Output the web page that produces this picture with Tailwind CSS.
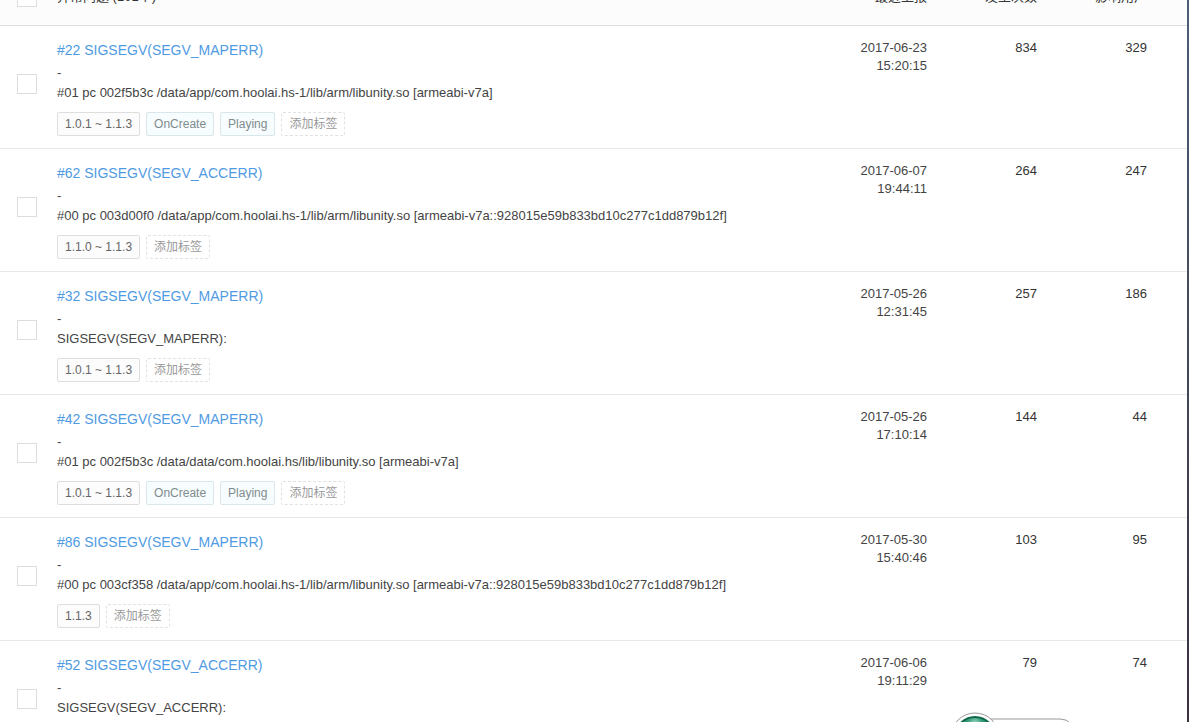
<!DOCTYPE html>
<html lang="zh-CN">

<head>
    <meta charset="UTF-8">
    <meta name="viewport" content="width=device-width, initial-scale=1.0">
    <title>异常问题</title>
    <script src="https://cdn.jsdelivr.net/npm/@tailwindcss/browser@4"></script>
</head>

<body class="relative h-screen overflow-hidden bg-white font-['Liberation_Sans','Noto_Sans_CJK_SC',sans-serif] text-[13px] text-[#444]">
    <!-- issue list, scrolled down a little -->
    <main class="-mt-[31px] bg-linear-to-b from-[#4c6178] to-[#3a3040] pr-[2px]">
        <table class="w-full table-fixed bg-white">
            <thead class="bg-[#fcfcfc] text-[#333]">
                <tr class="h-14 border-b border-[#dcdfe0]">
                    <th class="w-[57px] pl-[17px]"><input type="checkbox" aria-label="全选" class="block size-5 appearance-none border border-[#ddd] bg-white"></th>
                    <th class="text-left font-normal">异常问题 (101个)</th>
                    <th class="w-[110px] pr-10 text-right font-normal">最近上报</th>
                    <th class="w-[110px] pr-10 text-right font-normal">发生次数</th>
                    <th class="w-[110px] pr-10 text-right font-normal">影响用户</th>
                </tr>
            </thead>
            <tbody>
                <tr class="border-b border-[#e6e8e9] align-top">
                    <td class="pt-12 pl-[17px]"><input type="checkbox" aria-label="#22" class="block size-5 appearance-none border border-[#ddd] bg-white"></td>
                    <td class="py-3">
                        <a href="#" class="mb-px block text-sm leading-6 text-[#4f9be3]">#22 SIGSEGV(SEGV_MAPERR)</a>
                        <p class="leading-5">-</p>
                        <p class="leading-5">#01 pc 002f5b3c /data/app/com.hoolai.hs-1/lib/arm/libunity.so [armeabi-v7a]</p>
                        <div class="mt-[9px] flex gap-[6px] text-xs leading-[22px]">
                            <span class="rounded-xs border border-[#dedede] bg-[#fcfcfc] px-[7px] text-[#666]">1.0.1 ~ 1.1.3</span>
                            <a href="#" class="rounded-xs border border-[#d9e6ea] bg-[#f7fcfe] px-[7px] text-[#7f8c8d]">OnCreate</a>
                            <a href="#" class="rounded-xs border border-[#d9e6ea] bg-[#f7fcfe] px-[7px] text-[#7f8c8d]">Playing</a>
                            <button type="button" class="rounded-xs border border-dashed border-[#e2e2e2] px-[7px] text-[#999]">添加标签</button>
                        </div>
                    </td>
                    <td class="pt-[13px] pr-10 text-right leading-[18px]">2017-06-23<br>15:20:15</td>
                    <td class="pt-[13px] pr-10 text-right leading-[18px] text-[#333]">834</td>
                    <td class="pt-[13px] pr-10 text-right leading-[18px] text-[#333]">329</td>
                </tr>
                <tr class="border-b border-[#e6e8e9] align-top">
                    <td class="pt-12 pl-[17px]"><input type="checkbox" aria-label="#62" class="block size-5 appearance-none border border-[#ddd] bg-white"></td>
                    <td class="py-3">
                        <a href="#" class="mb-px block text-sm leading-6 text-[#4f9be3]">#62 SIGSEGV(SEGV_ACCERR)</a>
                        <p class="leading-5">-</p>
                        <p class="leading-5">#00 pc 003d00f0 /data/app/com.hoolai.hs-1/lib/arm/libunity.so [armeabi-v7a::928015e59b833bd10c277c1dd879b12f]</p>
                        <div class="mt-[9px] flex gap-[6px] text-xs leading-[22px]">
                            <span class="rounded-xs border border-[#dedede] bg-[#fcfcfc] px-[7px] text-[#666]">1.1.0 ~ 1.1.3</span>
                            <button type="button" class="rounded-xs border border-dashed border-[#e2e2e2] px-[7px] text-[#999]">添加标签</button>
                        </div>
                    </td>
                    <td class="pt-[13px] pr-10 text-right leading-[18px]">2017-06-07<br>19:44:11</td>
                    <td class="pt-[13px] pr-10 text-right leading-[18px] text-[#333]">264</td>
                    <td class="pt-[13px] pr-10 text-right leading-[18px] text-[#333]">247</td>
                </tr>
                <tr class="border-b border-[#e6e8e9] align-top">
                    <td class="pt-12 pl-[17px]"><input type="checkbox" aria-label="#32" class="block size-5 appearance-none border border-[#ddd] bg-white"></td>
                    <td class="py-3">
                        <a href="#" class="mb-px block text-sm leading-6 text-[#4f9be3]">#32 SIGSEGV(SEGV_MAPERR)</a>
                        <p class="leading-5">-</p>
                        <p class="leading-5">SIGSEGV(SEGV_MAPERR):</p>
                        <div class="mt-[9px] flex gap-[6px] text-xs leading-[22px]">
                            <span class="rounded-xs border border-[#dedede] bg-[#fcfcfc] px-[7px] text-[#666]">1.0.1 ~ 1.1.3</span>
                            <button type="button" class="rounded-xs border border-dashed border-[#e2e2e2] px-[7px] text-[#999]">添加标签</button>
                        </div>
                    </td>
                    <td class="pt-[13px] pr-10 text-right leading-[18px]">2017-05-26<br>12:31:45</td>
                    <td class="pt-[13px] pr-10 text-right leading-[18px] text-[#333]">257</td>
                    <td class="pt-[13px] pr-10 text-right leading-[18px] text-[#333]">186</td>
                </tr>
                <tr class="border-b border-[#e6e8e9] align-top">
                    <td class="pt-12 pl-[17px]"><input type="checkbox" aria-label="#42" class="block size-5 appearance-none border border-[#ddd] bg-white"></td>
                    <td class="py-3">
                        <a href="#" class="mb-px block text-sm leading-6 text-[#4f9be3]">#42 SIGSEGV(SEGV_MAPERR)</a>
                        <p class="leading-5">-</p>
                        <p class="leading-5">#01 pc 002f5b3c /data/data/com.hoolai.hs/lib/libunity.so [armeabi-v7a]</p>
                        <div class="mt-[9px] flex gap-[6px] text-xs leading-[22px]">
                            <span class="rounded-xs border border-[#dedede] bg-[#fcfcfc] px-[7px] text-[#666]">1.0.1 ~ 1.1.3</span>
                            <a href="#" class="rounded-xs border border-[#d9e6ea] bg-[#f7fcfe] px-[7px] text-[#7f8c8d]">OnCreate</a>
                            <a href="#" class="rounded-xs border border-[#d9e6ea] bg-[#f7fcfe] px-[7px] text-[#7f8c8d]">Playing</a>
                            <button type="button" class="rounded-xs border border-dashed border-[#e2e2e2] px-[7px] text-[#999]">添加标签</button>
                        </div>
                    </td>
                    <td class="pt-[13px] pr-10 text-right leading-[18px]">2017-05-26<br>17:10:14</td>
                    <td class="pt-[13px] pr-10 text-right leading-[18px] text-[#333]">144</td>
                    <td class="pt-[13px] pr-10 text-right leading-[18px] text-[#333]">44</td>
                </tr>
                <tr class="border-b border-[#e6e8e9] align-top">
                    <td class="pt-12 pl-[17px]"><input type="checkbox" aria-label="#86" class="block size-5 appearance-none border border-[#ddd] bg-white"></td>
                    <td class="py-3">
                        <a href="#" class="mb-px block text-sm leading-6 text-[#4f9be3]">#86 SIGSEGV(SEGV_MAPERR)</a>
                        <p class="leading-5">-</p>
                        <p class="leading-5">#00 pc 003cf358 /data/app/com.hoolai.hs-1/lib/arm/libunity.so [armeabi-v7a::928015e59b833bd10c277c1dd879b12f]</p>
                        <div class="mt-[9px] flex gap-[6px] text-xs leading-[22px]">
                            <span class="rounded-xs border border-[#dedede] bg-[#fcfcfc] px-[7px] text-[#666]">1.1.3</span>
                            <button type="button" class="rounded-xs border border-dashed border-[#e2e2e2] px-[7px] text-[#999]">添加标签</button>
                        </div>
                    </td>
                    <td class="pt-[13px] pr-10 text-right leading-[18px]">2017-05-30<br>15:40:46</td>
                    <td class="pt-[13px] pr-10 text-right leading-[18px] text-[#333]">103</td>
                    <td class="pt-[13px] pr-10 text-right leading-[18px] text-[#333]">95</td>
                </tr>
                <tr class="align-top">
                    <td class="pt-12 pl-[17px]"><input type="checkbox" aria-label="#52" class="block size-5 appearance-none border border-[#ddd] bg-white"></td>
                    <td class="py-3">
                        <a href="#" class="mb-px block text-sm leading-6 text-[#4f9be3]">#52 SIGSEGV(SEGV_ACCERR)</a>
                        <p class="leading-5">-</p>
                        <p class="leading-5">SIGSEGV(SEGV_ACCERR):</p>
                    </td>
                    <td class="pt-[13px] pr-10 text-right leading-[18px]">2017-06-06<br>19:11:29</td>
                    <td class="pt-[13px] pr-10 text-right leading-[18px] text-[#333]">79</td>
                    <td class="pt-[13px] pr-10 text-right leading-[18px] text-[#333]">74</td>
                </tr>
            </tbody>
        </table>
    </main>

    <!-- floating badge at the bottom edge -->
    <svg class="absolute right-[109px] bottom-0" width="130" height="10" viewBox="0 0 130 10" aria-hidden="true">
        <defs>
            <radialGradient id="ball" cx="0.5" cy="0.16" r="0.4">
                <stop offset="0" stop-color="#a5d8c4" />
                <stop offset="0.4" stop-color="#3fa37f" />
                <stop offset="1" stop-color="#13704f" />
            </radialGradient>
        </defs>
        <rect x="20" y="7" width="106" height="34" rx="16" fill="#fff" stroke="#999" />
        <circle cx="25" cy="25" r="24" fill="#fff" stroke="#999" />
        <circle cx="25" cy="25" r="20" fill="url(#ball)" stroke="#12694a" stroke-width="2" />
    </svg>
</body>

</html>
